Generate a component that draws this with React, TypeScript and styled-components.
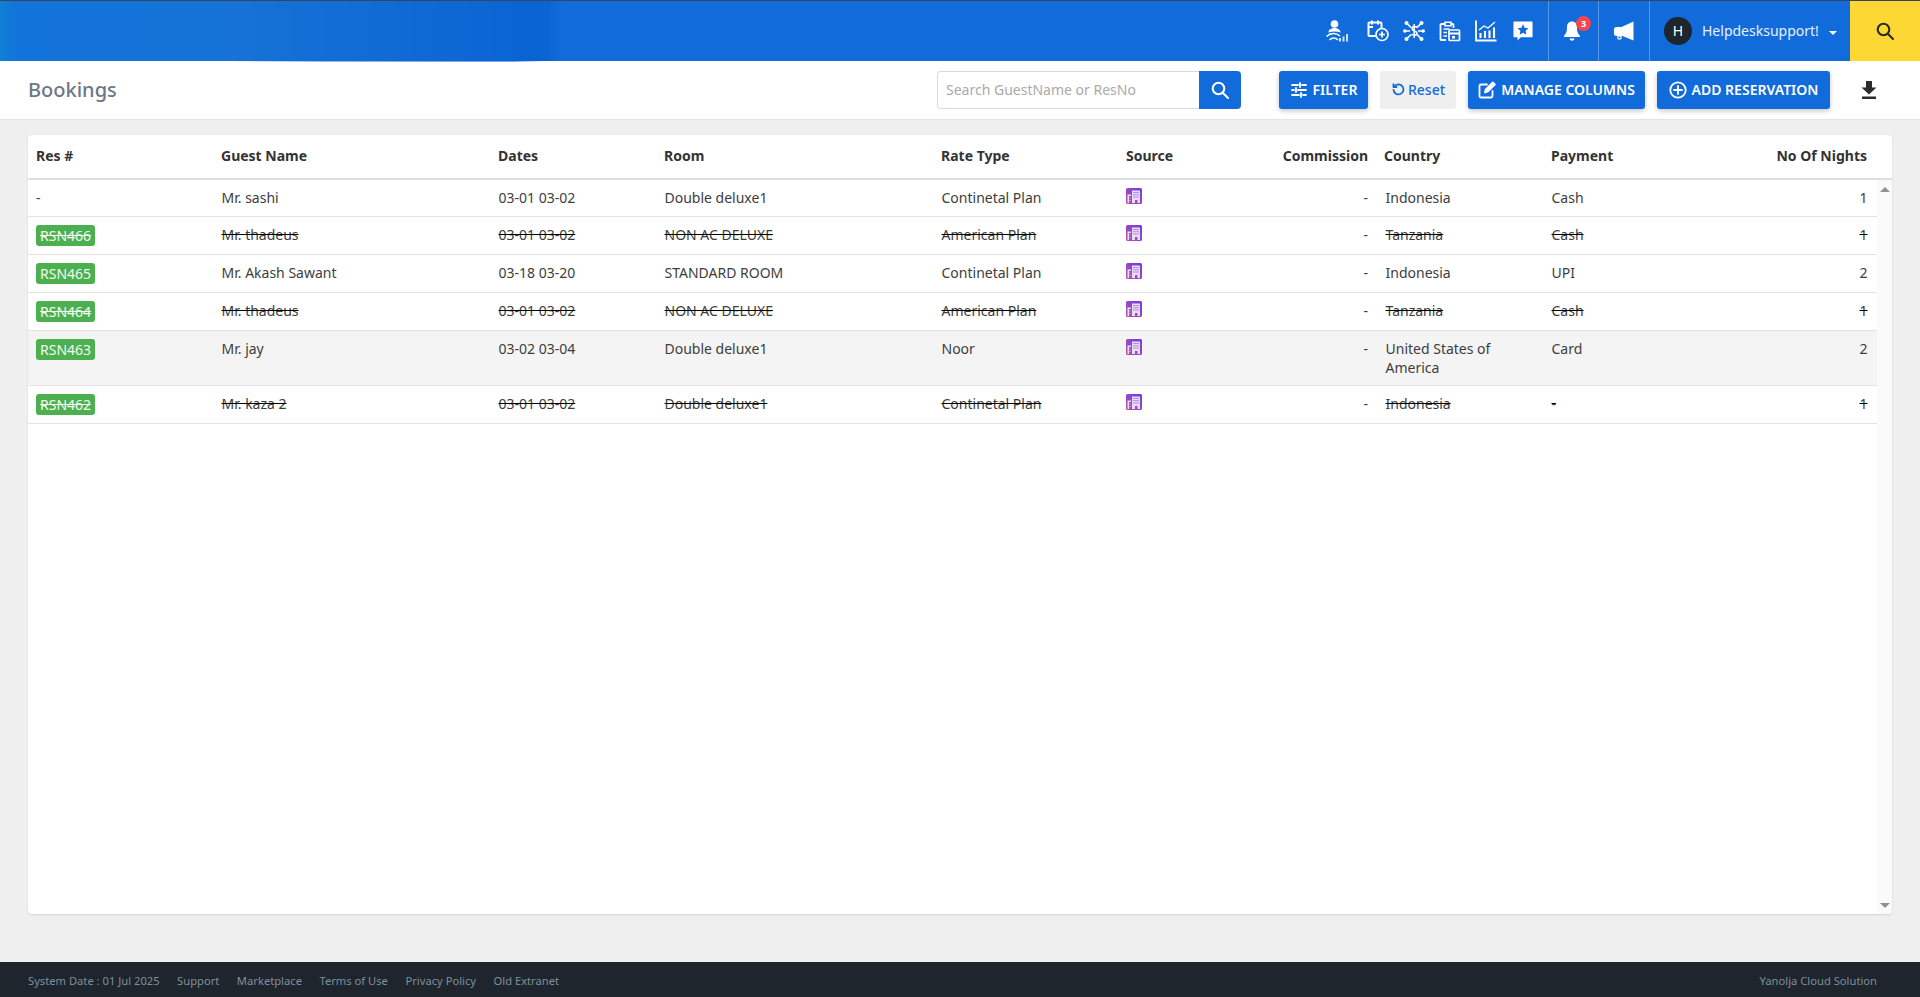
import React from "react";
import styled, { createGlobalStyle } from "styled-components";

const Global = createGlobalStyle`
  html, body { margin: 0; padding: 0; height: 100%; }
  body { font-family: "Noto Sans", "Open Sans", sans-serif; background: #efefef; color: #333; }
  * { box-sizing: border-box; }
`;

const BLUE = "#126bdb";

const Page = styled.div`
  height: 997px;
  display: flex;
  flex-direction: column;
  overflow: hidden;
`;

const TopBar = styled.header`
  position: relative;
  height: 61px;
  flex: none;
  background: ${BLUE};
  border-top: 1px solid #34465f;
  display: flex;
  align-items: stretch;
  justify-content: flex-end;
  color: #fff;
  overflow: hidden;
`;

const BlurPatch = styled.div`
  position: absolute;
  left: -10px;
  top: -10px;
  width: 563px;
  height: 85px;
  background: linear-gradient(90deg, #0e8ad0 0%, #1274da 4%, #1672d6 45%, #0a64d4 95%);
  filter: blur(4px);
`;

const NavIcons = styled.div`
  display: flex;
  align-items: center;
  gap: 14px;
  padding-right: 13px;
`;

const NavIcon = styled.svg<{ $after?: number }>`
  display: block;
  width: 22px;
  height: 22px;
  margin-right: ${(p) => p.$after ?? 0}px;
  fill: none;
  stroke: #fff;
  stroke-width: 1.7;
`;

const StarIcon = styled(NavIcon)`
  width: 20px;
  margin-right: 2px;
  stroke: none;
`;

const NavCell = styled.div<{ $w: number }>`
  position: relative;
  width: ${(p) => p.$w}px;
  border-left: 1px solid rgba(255, 255, 255, 0.3);
  display: flex;
  align-items: center;
  justify-content: center;
`;

const BellIcon = styled.svg`
  display: block;
  width: 20px;
  height: 24px;
  margin-left: -4px;
  fill: #fff;
`;

const CountBadge = styled.span`
  position: absolute;
  left: 27px;
  top: 15px;
  width: 15px;
  height: 15px;
  border-radius: 50%;
  background: #f4474f;
  color: #fff;
  font-size: 9px;
  font-weight: 700;
  line-height: 15px;
  text-align: center;
`;

const UserCell = styled(NavCell)`
  justify-content: flex-start;
  padding-left: 14px;
`;

const Avatar = styled.span`
  width: 28px;
  height: 28px;
  border-radius: 50%;
  background: #1e252d;
  color: #fff;
  font-size: 14px;
  line-height: 28px;
  text-align: center;
  flex: none;
`;

const UserName = styled.span`
  margin: -1px 0 0 10px;
  font-size: 14px;
  color: #e8f0fb;
  white-space: nowrap;
`;

const Caret = styled.span`
  margin-left: 10px;
  margin-top: 3px;
  width: 0;
  height: 0;
  border-left: 4px solid transparent;
  border-right: 4px solid transparent;
  border-top: 4px solid #fff;
`;

const SearchTile = styled.div`
  width: 70px;
  background: #fdd835;
  display: flex;
  align-items: center;
  justify-content: center;
`;

const SubBar = styled.div`
  position: relative;
  height: 59px;
  flex: none;
  background: #fff;
  border-bottom: 1px solid #e2e2e2;
  display: flex;
  align-items: center;
  padding: 0 43px 1px 28px;
`;

const Sliver = styled.div`
  position: absolute;
  left: 228px;
  top: 0;
  width: 315px;
  height: 1px;
  background: linear-gradient(90deg, #ffffff, #8fb9ee 30%, #6ea5ea 90%, #ffffff);
`;

const Title = styled.h1`
  margin: 0;
  flex: 1;
  font-size: 20px;
  font-weight: 500;
  color: #6c7885;
`;

const SearchBox = styled.div`
  display: flex;
  width: 304px;
  height: 38px;
  margin-right: 38px;
`;

const SearchInput = styled.input`
  flex: 1;
  min-width: 0;
  border: 1px solid #d6dce6;
  border-right: none;
  border-radius: 4px 0 0 4px;
  padding: 0 8px;
  font: 14px "Noto Sans", sans-serif;
  color: #333;
  &::placeholder { color: #aaa; opacity: 1; }
`;

const SearchButton = styled.button`
  width: 42px;
  border: none;
  border-radius: 0 4px 4px 0;
  background: ${BLUE};
  display: flex;
  align-items: center;
  justify-content: center;
  padding: 0;
`;

const ActionButton = styled.button<{ $w: number }>`
  width: ${(p) => p.$w}px;
  height: 38px;
  margin-right: 12px;
  border: none;
  border-radius: 3px;
  background: ${BLUE};
  color: #fff;
  font: 600 14px "Noto Sans", sans-serif;
  display: flex;
  align-items: center;
  justify-content: center;
  gap: 5px;
  padding: 0;
  box-shadow: 0 2px 5px rgba(0, 0, 0, 0.22);
`;

const ResetButton = styled(ActionButton)`
  background: #efefef;
  color: ${BLUE};
  font-weight: 500;
  gap: 2px;
  box-shadow: none;
`;

const BtnIcon = styled.svg`
  display: block;
  width: 18px;
  height: 18px;
  fill: none;
  stroke: currentColor;
  stroke-width: 1.8;
  stroke-linecap: round;
  stroke-linejoin: round;
`;

const ResetIcon = styled(BtnIcon)`
  width: 15px;
  height: 15px;
  stroke-width: 2.2;
`;

const DownloadIcon = styled.svg`
  display: block;
  width: 16px;
  height: 18px;
  margin-left: 19px;
  fill: #2c2c2c;
`;

const Main = styled.main`
  flex: 1;
  min-height: 0;
  padding: 15px 28px 48px;
`;

const Card = styled.section`
  height: 779px;
  background: #fff;
  border-radius: 4px;
  box-shadow: 0 1px 2px rgba(0, 0, 0, 0.12);
  display: flex;
  flex-direction: column;
  overflow: hidden;
`;

const COLS = "185px 277px 166px 277px 185px 129px 129px 167px 167px 1fr";

const HeadRow = styled.div`
  display: grid;
  grid-template-columns: ${COLS};
  height: 45px;
  flex: none;
  border-bottom: 2px solid #dedede;
  padding-right: 25px;
`;

const HeadCell = styled.div<{ $right?: boolean }>`
  padding: 11px 8px 0;
  font-size: 14px;
  font-weight: 700;
  line-height: 19px;
  color: #333;
  text-align: ${(p) => (p.$right ? "right" : "left")};
  white-space: nowrap;
  &:last-child { padding-right: 0; }
`;

const BodyWrap = styled.div`
  flex: 1;
  min-height: 0;
  display: flex;
`;

const Rows = styled.div`
  flex: 1;
  min-width: 0;
`;

const Row = styled.div<{ $hover?: boolean }>`
  display: grid;
  grid-template-columns: ${COLS};
  min-height: 37px;
  border-bottom: 1px solid #e2e2e2;
  background: ${(p) => (p.$hover ? "#f4f4f4" : "#fff")};
  padding-right: 9.5px;
`;

const Cell = styled.div<{ $right?: boolean; $strike?: boolean; $pad?: number }>`
  padding: 8px ${(p) => (p.$right ? 8 : 7)}px 8px ${(p) => (p.$right ? 8 : p.$pad ?? 8.5)}px;
  font-size: 14px;
  line-height: 19px;
  color: #3d3d3d;
  text-align: ${(p) => (p.$right ? "right" : "left")};
  text-decoration: ${(p) => (p.$strike ? "line-through #000" : "none")};
  &:first-child { padding-left: 8px; }
  &:last-child { padding-right: 0; }
`;

const ResBadge = styled.span<{ $strike?: boolean }>`
  display: inline-block;
  vertical-align: top;
  height: 21px;
  padding: 0 4px;
  border-radius: 3px;
  background: #4caf50;
  color: #f2fbf2;
  line-height: 21px;
  text-decoration: ${(p) => (p.$strike ? "line-through #f2fbf2" : "none")};
`;

const SourceLogo = styled.svg`
  display: block;
  width: 16px;
  height: 16px;
`;

const Track = styled.div`
  width: 15px;
  flex: none;
  background: #fafafa;
  display: flex;
  flex-direction: column;
  justify-content: space-between;
  align-items: center;
  padding: 7px 0 6px;
`;

const Arrow = styled.span<{ $down?: boolean }>`
  width: 0;
  height: 0;
  border-left: 5px solid transparent;
  border-right: 5px solid transparent;
  border-${(p) => (p.$down ? "top" : "bottom")}: 5px solid #8f8f8f;
`;

const Footer = styled.footer`
  height: 35px;
  flex: none;
  background: #1e252d;
  display: flex;
  align-items: center;
  justify-content: space-between;
  padding: 2px 43px 0 28px;
  font-size: 11.2px;
  color: #7f8f9b;
`;

const FooterLinks = styled.nav`
  display: flex;
  gap: 17.5px;
`;

const Building = () => (
  <SourceLogo viewBox="0 0 16 16">
    <defs>
      <linearGradient id="srcGrad" x1="1" y1="0" x2="0" y2="1">
        <stop offset="0" stopColor="#6d3be6" />
        <stop offset="1" stopColor="#bb53a8" />
      </linearGradient>
    </defs>
    <rect width="16" height="16" rx="1.5" fill="url(#srcGrad)" />
    <path d="M6 15V2.500h8V15h-2.600v-3H9v3H6zM1.500 15V6.500H5V8H3v7H1.500z" fill="#e9dcf6" />
    <path d="M7.500 4h1v1h-1zM9.500 4h1v1h-1zM11.500 4h1v1h-1zM7.500 6.300h1v1h-1zM9.500 6.300h1v1h-1zM11.500 6.300h1v1h-1zM7.500 8.600h1v1h-1zM9.500 8.600h1v1h-1zM11.500 8.600h1v1h-1z" fill="#7b3fd0" />
    <path d="M3.500 9.500h1v1h-1zM3.500 12h1v1h-1z" fill="#e9dcf6" />
  </SourceLogo>
);

type Booking = {
  res: string;
  guest: string;
  dates: string;
  room: string;
  rate: string;
  country: string;
  pay: string;
  nights: string;
  strike?: boolean;
  hover?: boolean;
};

const bookings: Booking[] = [
  { res: "-", guest: "Mr. sashi", dates: "03-01 03-02", room: "Double deluxe1", rate: "Continetal Plan", country: "Indonesia", pay: "Cash", nights: "1" },
  { res: "RSN466", guest: "Mr. thadeus", dates: "03-01 03-02", room: "NON AC DELUXE", rate: "American Plan", country: "Tanzania", pay: "Cash", nights: "1", strike: true },
  { res: "RSN465", guest: "Mr. Akash Sawant", dates: "03-18 03-20", room: "STANDARD ROOM", rate: "Continetal Plan", country: "Indonesia", pay: "UPI", nights: "2" },
  { res: "RSN464", guest: "Mr. thadeus", dates: "03-01 03-02", room: "NON AC DELUXE", rate: "American Plan", country: "Tanzania", pay: "Cash", nights: "1", strike: true },
  { res: "RSN463", guest: "Mr. jay", dates: "03-02 03-04", room: "Double deluxe1", rate: "Noor", country: "United States of America", pay: "Card", nights: "2", hover: true },
  { res: "RSN462", guest: "Mr. kaza 2", dates: "03-01 03-02", room: "Double deluxe1", rate: "Continetal Plan", country: "Indonesia", pay: "-", nights: "1", strike: true },
];

const heads: [string, boolean?][] = [
  ["Res #"], ["Guest Name"], ["Dates"], ["Room"], ["Rate Type"], ["Source"],
  ["Commission", true], ["Country"], ["Payment"], ["No Of Nights", true],
];

const SearchGlyph = ({ color }: { color: string }) => (
  <svg width="20" height="20" viewBox="0 0 20 20" fill="none" stroke={color} strokeWidth="2.1" strokeLinecap="round">
    <circle cx="8.500" cy="8.500" r="5.800" />
    <path d="M13 13l5 5" />
  </svg>
);

export default function App() {
  return (
    <Page>
      <Global />
      <TopBar>
        <BlurPatch />
        <NavIcons>
          <NavIcon viewBox="0 0 22 22" $after={5}>
            <circle cx="8.500" cy="4" r="3.800" fill="#fff" stroke="none" />
            <path d="M2.500 12.500c0-3 3-4.500 6-4.500s6 1.500 6 4.500c-4-1.500-8-1.500-12 0z" fill="#fff" stroke="none" />
            <path d="M.5 16.500c4-4 9.500-4 13.500-.5M3.500 20c2.500-2.800 6-2.800 8.500 0" strokeWidth="1.500" />
            <path d="M13 18h2v3.500h-2zM16.500 16.500h2v5h-2zM20 14h2v7.500h-2z" fill="#fff" stroke="none" opacity=".8" />
          </NavIcon>
          <NavIcon viewBox="0 0 22 22">
            <path d="M9 16H2.500a1 1 0 0 1-1-1V3.500a1 1 0 0 1 1-1h11a1 1 0 0 1 1 1V8" strokeWidth="2" />
            <path d="M5 .5v4M11 .5v4M2 7h4" strokeWidth="2" />
            <circle cx="15" cy="14.500" r="6" />
            <path d="M15 11.500v6M12 14.500h6" />
          </NavIcon>
          <NavIcon viewBox="0 0 22 22">
            <path d="M4 3.500l4 4M18 3.500l-4 4M2 11h5M20 11h-5M4 18.500l4-4M18 18.500l-4-4" />
            <circle cx="3.500" cy="3" r="2" fill="#fff" stroke="none" />
            <circle cx="18.500" cy="3" r="2" fill="#fff" stroke="none" />
            <circle cx="1.800" cy="11" r="1.800" fill="#fff" stroke="none" />
            <circle cx="20.200" cy="11" r="1.800" fill="#fff" stroke="none" />
            <circle cx="3.500" cy="19" r="2" fill="#fff" stroke="none" />
            <circle cx="18.500" cy="19" r="2" fill="#fff" stroke="none" />
            <path d="M14 7.500c-.8-1.200-5-1.600-5 1.200 0 3 5 1.600 5 4.500 0 2.600-4.400 2.200-5.400.9M11.200 4v14" strokeWidth="1.500" />
          </NavIcon>
          <NavIcon viewBox="0 0 22 22">
            <path d="M7 20H2.500a1 1 0 0 1-1-1V5a1 1 0 0 1 1-1H6M12 4h1.500a1 1 0 0 1 1 1v3" strokeWidth="1.800" />
            <path d="M6 2.200h6v3.600H6z" strokeWidth="1.600" />
            <path d="M4.500 9h6M4.500 12.500h3.500M4.500 16h3.500" strokeWidth="1.500" />
            <rect x="10" y="10" width="10.500" height="10.500" rx="1" />
            <path d="M10 13.500h10.500" strokeWidth="2" />
            <path d="M13 16h3v2.500h-3z" fill="#fff" stroke="none" />
          </NavIcon>
          <NavIcon viewBox="0 0 22 22" $after={2}>
            <path d="M1 .5V20.500h20.500" strokeWidth="1.800" />
            <path d="M4 10l5-4 4 2 7-6" strokeWidth="1.300" />
            <path d="M5.500 13v5M10 11v7M14.500 10.500v7.500M19 7.500v10.500" strokeWidth="2.100" />
          </NavIcon>
          <StarIcon viewBox="0 0 22 22">
            <path d="M1.500.5h19a1 1 0 0 1 1 1v15.500a1 1 0 0 1-1 1H8.500L5 21.500V18H1.500a1 1 0 0 1-1-1V1.500a1 1 0 0 1 1-1z" fill="#fff" />
            <path d="M11 3.500l1.800 3.900 4.200.5-3.100 2.900.8 4.200-3.700-2.100-3.700 2.100.8-4.200L5 7.900l4.200-.5z" fill={BLUE} />
          </StarIcon>
        </NavIcons>
        <NavCell $w={50}>
          <BellIcon viewBox="0 0 20 24">
            <path d="M10 2.500c-3.300 0-5 2.400-5 5.500 0 4.500-.8 6.600-3 8.700V18h16v-1.300c-2.200-2.100-3-4.200-3-8.700 0-3.100-1.700-5.500-5-5.500z" />
            <path d="M7.500 19.500h5c0 1.200-1 2.200-2.500 2.200s-2.500-1-2.500-2.200z" />
          </BellIcon>
          <CountBadge>3</CountBadge>
        </NavCell>
        <NavCell $w={51}>
          <svg width="22" height="20" viewBox="0 0 22 20" fill="#fff">
            <path d="M20.500 0.500v19l-11-4.500H3.500a2.500 2.500 0 0 1-2.500-2.500v-4A2.500 2.500 0 0 1 3.500 6h5z" />
            <circle cx="6.500" cy="16.500" r="1.700" fill="none" stroke="#fff" strokeWidth="1.200" />
          </svg>
        </NavCell>
        <UserCell $w={201}>
          <Avatar>H</Avatar>
          <UserName>Helpdesksupport!</UserName>
          <Caret />
        </UserCell>
        <SearchTile>
          <SearchGlyph color="#2b2a1c" />
        </SearchTile>
      </TopBar>

      <SubBar>
        <Sliver />
        <Title>Bookings</Title>
        <SearchBox>
          <SearchInput placeholder="Search GuestName or ResNo" />
          <SearchButton aria-label="Search">
            <SearchGlyph color="#fff" />
          </SearchButton>
        </SearchBox>
        <ActionButton $w={89}>
          <BtnIcon viewBox="0 0 18 18">
            <path d="M2 4h6M12 4h4M2 9h2M8 9h8M2 14h7M13 14h3M10 2v4M6 7v4M11 12v4" />
          </BtnIcon>
          FILTER
        </ActionButton>
        <ResetButton $w={76}>
          <ResetIcon viewBox="0 0 18 18">
            <path d="M4 5.500A6 6 0 1 1 3 9.500" />
            <path d="M3 2.500v3.500h3.500" />
          </ResetIcon>
          Reset
        </ResetButton>
        <ActionButton $w={177}>
          <BtnIcon viewBox="0 0 18 18">
            <path d="M14.500 10v5a1.500 1.500 0 0 1-1.500 1.500H3A1.500 1.500 0 0 1 1.500 15V5A1.500 1.500 0 0 1 3 3.500h6" />
            <path d="M7 11.500l.6-2.800L14.800 1.500l2 2-7.200 7.200z" fill="currentColor" />
          </BtnIcon>
          MANAGE COLUMNS
        </ActionButton>
        <ActionButton $w={173}>
          <BtnIcon viewBox="0 0 18 18">
            <circle cx="9" cy="9" r="7.700" />
            <path d="M9 5v8M5 9h8" />
          </BtnIcon>
          ADD RESERVATION
        </ActionButton>
        <DownloadIcon viewBox="0 0 16 18">
          <path d="M5 0h6v6.500h4.500L8 13.500.5 6.500H5z" />
          <rect x="1" y="15.500" width="14" height="2.500" />
        </DownloadIcon>
      </SubBar>

      <Main>
        <Card>
          <HeadRow>
            {heads.map(([label, right]) => (
              <HeadCell key={label} $right={right}>{label}</HeadCell>
            ))}
          </HeadRow>
          <BodyWrap>
            <Rows>
              {bookings.map((b) => (
                <Row key={b.res + b.guest} $hover={b.hover}>
                  <Cell>
                    {b.res === "-" ? "-" : <ResBadge $strike={b.strike}>{b.res}</ResBadge>}
                  </Cell>
                  <Cell $strike={b.strike}>{b.guest}</Cell>
                  <Cell $strike={b.strike}>{b.dates}</Cell>
                  <Cell $strike={b.strike}>{b.room}</Cell>
                  <Cell $strike={b.strike}>{b.rate}</Cell>
                  <Cell $pad={8}><Building /></Cell>
                  <Cell $right>-</Cell>
                  <Cell $strike={b.strike} $pad={9.5}>{b.country}</Cell>
                  <Cell $strike={b.strike}>{b.pay}</Cell>
                  <Cell $right $strike={b.strike}>{b.nights}</Cell>
                </Row>
              ))}
            </Rows>
            <Track>
              <Arrow />
              <Arrow $down />
            </Track>
          </BodyWrap>
        </Card>
      </Main>

      <Footer>
        <FooterLinks>
          <span>System Date : 01 Jul 2025</span>
          <span>Support</span>
          <span>Marketplace</span>
          <span>Terms of Use</span>
          <span>Privacy Policy</span>
          <span>Old Extranet</span>
        </FooterLinks>
        <span>Yanolja Cloud Solution</span>
      </Footer>
    </Page>
  );
}
